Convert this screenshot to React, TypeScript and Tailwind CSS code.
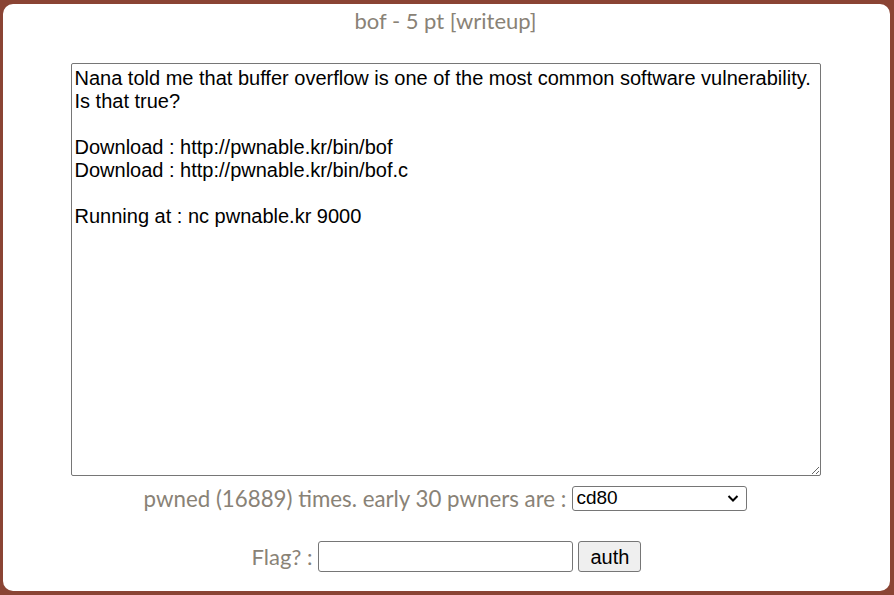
import React from "react";

const desc = `Nana told me that buffer overflow is one of the most common software vulnerability.
Is that true?

Download : http://pwnable.kr/bin/bof
Download : http://pwnable.kr/bin/bof.c

Running at : nc pwnable.kr 9000
`;

export default function App() {
  return (
    <div className="h-[595px] w-[894px] bg-[#8a4434] pt-[4px] pl-[3px] pr-[4px] pb-[4px]">
      <div className="flex h-full flex-col items-center rounded-[10px] bg-white pr-[2px] font-['Lato',sans-serif] text-[#898276]">
        {/* title */}
        <div className="mt-[4px] text-[22px] leading-[26px]">bof - 5 pt [writeup]</div>

        {/* challenge text */}
        <textarea
          readOnly
          defaultValue={desc}
          className="mt-[29px] h-[413px] w-[750px] resize rounded-[2px] border border-[#767676] bg-white px-[3px] py-[3px] font-['Liberation_Sans',Arial,sans-serif] text-[20px] leading-[23px] text-black outline-none"
        />

        {/* pwners */}
        <div className="mt-[10px] flex items-center gap-[6px]">
          <span className="text-[22.3px] leading-[25px]">pwned (16889) times. early 30 pwners are :</span>
          <div className="relative h-[25px] w-[175px] rounded-[3px] border border-[#767676] bg-white">
            <span className="absolute left-[3px] top-[0px] font-['Liberation_Sans',Arial,sans-serif] text-[19px] leading-[22px] text-black">
              cd80
            </span>
            <svg className="absolute right-[7px] top-[7px]" width="12" height="9" viewBox="0 0 12 9">
              <path d="M1.5 2 L6 6.5 L10.5 2" fill="none" stroke="#000" strokeWidth="2" />
            </svg>
          </div>
        </div>

        {/* flag */}
        <div className="mt-[30px] ml-[2px] flex items-center">
          <span className="mr-[6px] text-[22px] leading-[25px]">Flag? :</span>
          <input
            type="text"
            className="h-[31px] w-[255px] rounded-[3px] border border-[#767676] bg-white px-[4px] font-['Liberation_Sans',Arial,sans-serif] text-[18px] text-black outline-none"
          />
          <button className="ml-[5px] h-[31px] w-[63px] rounded-[3px] border border-[#767676] bg-[#efefef] font-['Liberation_Sans',Arial,sans-serif] text-[20px] leading-[24px] text-black">
            auth
          </button>
        </div>
      </div>
    </div>
  );
}
